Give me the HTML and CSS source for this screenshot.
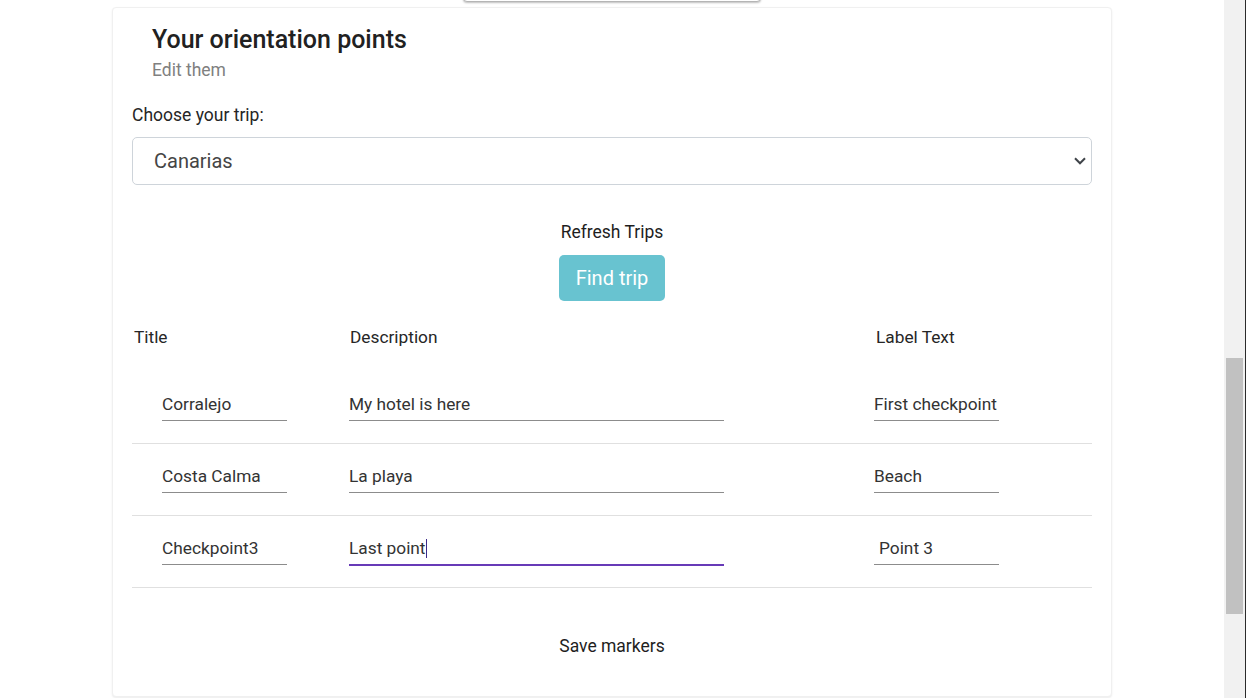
FILE: index.html
```html
<!DOCTYPE html>
<html>
<head>
<meta charset="utf-8">
<link rel="stylesheet" href="styles.css">
</head>
<body>
<div class="page">
  <div class="main">
    <div class="menu-edge"></div>
    <div class="card">
      <div class="card-header">
        <div class="card-title">Your orientation points</div>
        <div class="card-subtitle">Edit them</div>
      </div>
      <div class="field-label">Choose your trip:</div>
      <div class="select">
        <span class="select-value">Canarias</span>
        <svg class="chevron" width="12" height="8" viewBox="0 0 12 8"><path d="M1 1.3 L6 6.3 L11 1.3" fill="none" stroke="#3f4449" stroke-width="2"/></svg>
      </div>
      <div class="actions">
        <div class="text-btn">Refresh Trips</div>
        <div class="find-btn">Find trip</div>
      </div>
      <div class="table">
        <div class="row head">
          <div class="cell c1"><span class="hd hd1">Title</span></div>
          <div class="cell c2"><span class="hd hd2">Description</span></div>
          <div class="cell c3"><span class="hd hd3">Label Text</span></div>
        </div>
        <div class="row body-row">
          <div class="cell c1"><div class="inp short ml">Corralejo</div></div>
          <div class="cell c2"><div class="inp long">My hotel is here</div></div>
          <div class="cell c3"><div class="inp short">First checkpoint</div></div>
        </div>
        <div class="row body-row">
          <div class="cell c1"><div class="inp short ml">Costa Calma</div></div>
          <div class="cell c2"><div class="inp long">La playa</div></div>
          <div class="cell c3"><div class="inp short">Beach</div></div>
        </div>
        <div class="row body-row">
          <div class="cell c1"><div class="inp short ml">Checkpoint3</div></div>
          <div class="cell c2"><div class="inp long focused">Last point<span class="caret"></span></div></div>
          <div class="cell c3"><div class="inp short indent">Point 3</div></div>
        </div>
      </div>
      <div class="save-wrap"><div class="text-btn">Save markers</div></div>
    </div>
  </div>
  <div class="scrollbar"><div class="thumb"></div></div>
</div>
</body>
</html>
```

FILE: styles.css
```css
* { box-sizing: border-box; }
html, body { margin: 0; padding: 0; background: #fff; }
body { font-family: Roboto, "Noto Sans", Arial, sans-serif; color: #212121; }

.page { display: flex; height: 698px; overflow: hidden; }
.main { flex: 1; position: relative; padding-top: 7px; }

.menu-edge {
  position: absolute; left: 463px; top: -10px; width: 298px; height: 12px;
  background: #fff; border: 1px solid #b5b5b5; border-radius: 4px;
  box-shadow: 0 1px 2px rgba(0,0,0,.25);
}

.card {
  width: 1000px; height: 690px; margin: 0 auto; padding: 0 19px;
  background: #fff; border-radius: 4px;
  border: 1px solid #f0f0f0;
  box-shadow: 0 1px 2px rgba(0,0,0,.08);
}

.card-header { padding-left: 20px; padding-top: 16px; }
.card-title { font-size: 25px; line-height: 32px; font-weight: 500; color: #212121; }
.card-subtitle { margin-top: 3px; font-size: 17.5px; line-height: 22px; color: #808080; }

.field-label { margin-top: 22px; font-size: 17.5px; line-height: 24px; color: #262626; }

.select {
  margin-top: 10px; height: 48px; border: 1px solid #ced4da; border-radius: 5px;
  display: flex; align-items: center; justify-content: space-between;
  padding: 0 5px 0 21px;
}
.select-value { font-size: 20px; color: #454545; }
.chevron { display: block; }

.actions { display: flex; flex-direction: column; align-items: center; margin-top: 35px; }
.text-btn { font-size: 17.5px; line-height: 24px; font-weight: 400; color: #1e1e1e; }
.find-btn {
  margin-top: 11px; height: 46px; padding: 0 17px; border-radius: 5px;
  background: #68c3d0; color: #fff; font-size: 20px; line-height: 46px;
}

.table { margin-top: 24px; }
.row { display: flex; }
.row.head { height: 47px; }
.body-row { height: 72px; border-bottom: 1px solid #e0e0e0; padding-top: 22px; }
.cell.c1 { width: 217px; }
.cell.c2 { width: 525px; }
.cell.c3 { flex: 1; }
.hd { display: block; font-size: 17.3px; line-height: 24px; color: #262626; }
.hd1 { padding-left: 2px; }
.hd2 { padding-left: 1px; }
.hd3 { padding-left: 2px; }

.inp {
  height: 27px; font-size: 17.3px; line-height: 21px; color: #333;
  border-bottom: 1px solid #8c8c8c; padding-bottom: 5px; white-space: nowrap; overflow: hidden;
}
.inp.short { width: 125px; }
.inp.long { width: 375px; }
.inp.ml { margin-left: 30px; }
.inp.indent { padding-left: 5px; }
.inp.focused { height: 28px; border-bottom: 2px solid #673ab7; margin-bottom: -1px; }
.caret { display: inline-block; width: 1px; height: 19px; background: #3d2a8a; vertical-align: -4px; }

.save-wrap { display: flex; justify-content: center; margin-top: 46px; }

.scrollbar { width: 22px; background: #f1f1f1; border-right: 1px solid #2b2b2b; padding-left: 2px; }
.thumb { width: 17px; height: 256px; margin-top: 358px; background: #c1c1c1; }
```
